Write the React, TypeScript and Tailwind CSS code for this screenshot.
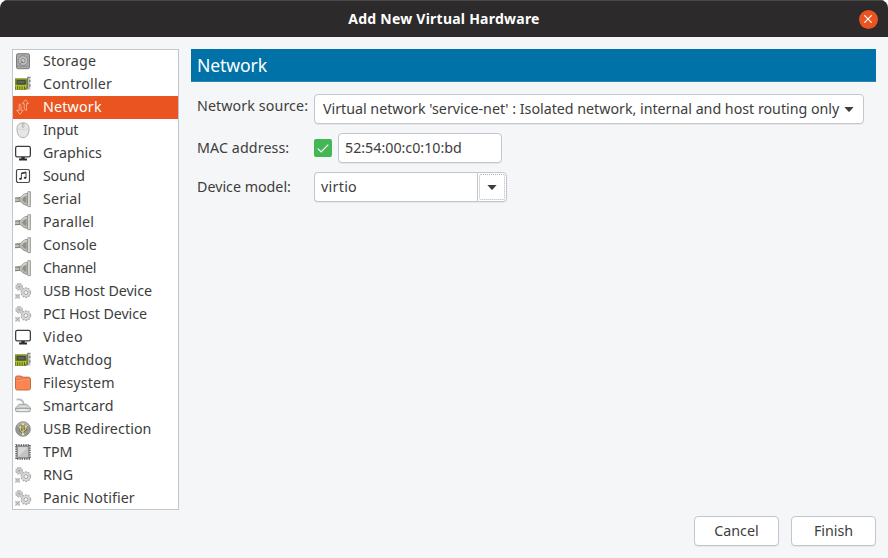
import type { ReactNode } from "react";

function Icon({ children }: { children: ReactNode }) {
  return (
    <svg viewBox="0 0 16 16" className="mb-0.5 block h-4 w-4 shrink-0 overflow-visible" fill="none">
      {children}
    </svg>
  );
}

const Disk = () => (
  <Icon>
    <rect x="1.5" y="0.7" width="13" height="15" rx="1.6" fill="#a9a9a9" stroke="#7b7b7b" />
    <path d="M2.5 13.2h11" stroke="#8f8f8f" />
    <circle cx="8" cy="7.6" r="4.9" fill="#bdbdbd" stroke="#808080" strokeWidth="0.8" />
    <circle cx="8" cy="7.6" r="2.1" fill="#d4d4d4" stroke="#777" strokeWidth="0.8" />
    <path d="M8 7.6 5.2 10.7" stroke="#777" />
  </Icon>
);

const Card = () => (
  <Icon>
    <path d="M0 2.4h13v10.4H0z" fill="#7c8c20" />
    <path d="M0 2.9h13" stroke="#98a53c" />
    <path d="M2.2 4.4h8v3.6h-8z" fill="#59636a" stroke="#333c2b" strokeWidth="0.8" />
    <path d="M0 9h12.4v1.4H0z" fill="#a8bc24" />
    <path d="M0 10.4h11.6v3.4H0z" fill="#56631a" />
    <path d="M1.4 9.5v4M3.7 9.5v4M6 9.5v4M8.3 9.5v4M10.6 9.5v3" stroke="#b7c92c" strokeWidth="1.3" />
    <path d="M12.9 1.6v12" stroke="#6f7170" strokeWidth="1.2" />
    <path d="M12.4 1.4h3.2" stroke="#777" strokeWidth="1.2" />
    <path d="M14.6 1.6v11.8" stroke="#c0c0c0" strokeWidth="1.5" />
    <path d="M14.9 4v2M14.9 8.3v2.4" stroke="#666" />
  </Icon>
);

const Arrows = () => (
  <Icon>
    <g stroke="#f9bfa8" strokeWidth="0.8" strokeLinejoin="round">
      <path d="M4.2 4.9 6 6.3v5h2.1l-2.9 4-3.5-4h2.5z" />
      <path d="M9.2 9.9V4.7H7.1l3.4-4 3.2 4h-2.2v6.8z" />
    </g>
  </Icon>
);

const Mouse = () => (
  <Icon>
    <path d="M8 0.9C4.2 0.9 2 2.9 2 6.6c0 5.5 2 9 6 9s6-3.5 6-9c0-3.7-2.2-5.7-6-5.7Z" fill="#e6e6e4" stroke="#a6a6a4" strokeWidth="0.9" />
    <path d="M3 6.8c3.4 1 6.6 1 10 0" stroke="#d0d0ce" strokeWidth="0.7" />
    <rect x="7.2" y="1.1" width="1.6" height="4.4" rx="0.8" fill="#f8f8f8" stroke="#999" strokeWidth="0.7" />
  </Icon>
);

const Monitor = () => (
  <Icon>
    <rect x="0.65" y="1.4" width="14.7" height="10.4" rx="1.6" fill="#fff" stroke="#3b3b3b" strokeWidth="1.25" />
    <path d="M6.3 12h3.4v1.5H12v1.9H4v-1.9h2.3z" fill="#2c2c2c" />
  </Icon>
);

const Music = () => (
  <Icon>
    <rect x="1.5" y="1.5" width="13" height="13" rx="1.7" fill="#fff" stroke="#484848" strokeWidth="1.2" />
    <path d="M6.4 10.6V5l4.6-1v5.6" stroke="#333" strokeWidth="0.9" />
    <path d="M6.4 5 11 4v1.2L6.4 6.2z" fill="#333" />
    <ellipse cx="5.5" cy="10.8" rx="1.4" ry="1.1" fill="#333" />
    <ellipse cx="10.1" cy="9.8" rx="1.4" ry="1.1" fill="#333" />
  </Icon>
);

const Plug = () => (
  <Icon>
    <path d="M0 6.9 5.2 6.3v4.4L0 11z" fill="#a5a6a0" />
    <path d="M0 7.1 5.2 6.6M0 10.8l5.2-.4" stroke="#7b7c75" strokeWidth="0.9" />
    <path d="M0 9h5" stroke="#d5d6d0" strokeWidth="1" />
    <path d="M4.4 6.6C7.4 6.2 6.9 2.9 12.6 2.2v12.2C6.9 13.8 7.4 10.9 4.4 10.4z" fill="#b9bab3" stroke="#83847d" strokeWidth="0.8" />
    <path d="M7.2 8.4C8.2 6.6 9 5.6 11.4 5.2v6.6C9 11.4 8 10.4 7.2 8.4z" fill="#8f9189" />
    <path d="M7 6.6C8.2 4.6 9.2 3.9 11.8 3.6" stroke="#e6e7e2" strokeWidth="0.9" />
    <path d="M12.9 0.7h2.5v15h-2.5z" fill="#c6c7c0" stroke="#8b8c85" strokeWidth="0.8" />
    <path d="M13.8 1.3v13.8" stroke="#eeeeea" strokeWidth="0.9" />
  </Icon>
);

const Gears = () => (
  <Icon>
    <circle cx="4.1" cy="3.7" r="3.2" stroke="#b0b0b0" strokeWidth="1.3" strokeDasharray="1.7 0.82" />
    <circle cx="4.1" cy="3.7" r="2.7" fill="#d0d0d0" stroke="#b4b4b4" strokeWidth="0.7" />
    <circle cx="4.1" cy="3.7" r="1" fill="#a0a0a0" />
    <circle cx="10.9" cy="9.6" r="4.7" stroke="#a8a8a8" strokeWidth="1.2" strokeDasharray="1.8 1.15" />
    <circle cx="10.9" cy="9.6" r="4.1" fill="#dedede" stroke="#b2b2b2" strokeWidth="0.7" />
    <circle cx="10.9" cy="9.6" r="2" fill="#f4f4f4" stroke="#9c9c9c" strokeWidth="0.9" />
    <path d="M0.2 11h4.8v4.6H0.2z" fill="#d4d4d4" />
    <path d="m0.4 11.2 4.4 4.2M4.8 11.2.4 15.4" stroke="#a6a6a6" strokeWidth="0.9" />
  </Icon>
);

const Folder = () => (
  <Icon>
    <path d="M0.5 3c0-1.4.6-2 2-2h3.2c1 0 1.3 1.2 2.4 1.2h5.4c1.3 0 2 .7 2 2v8.8c0 1.3-.7 2-2 2h-11c-1.3 0-2-.7-2-2z" fill="#fd8650" stroke="#b9623c" strokeWidth="0.9" />
    <path d="M1.1 4.6h4.6c1 0 1.2-1.3 2.4-1.3h6.6" stroke="#d96836" strokeWidth="0.8" />
    <path d="M1.3 5.4h4.8c1 0 1.2-1.2 2.3-1.2h6.2" stroke="#ffa983" strokeWidth="0.7" />
  </Icon>
);

const Reader = () => (
  <Icon>
    <path d="M1.6 1.6c4-.6 6.4.4 7.2 4.6" stroke="#b9b9b9" strokeWidth="1.8" />
    <path d="M0.6 9.8 4.2 6.3h7.6l3.6 3.5v2.6c0 .9-.5 1.3-1.4 1.3H2c-.9 0-1.4-.4-1.4-1.3z" fill="#dcdedf" stroke="#8c8f91" strokeWidth="0.8" />
    <path d="M3.8 8.9 5.3 7.3h5.4l1.5 1.6z" fill="#fdfdfd" stroke="#acacac" strokeWidth="0.6" />
    <path d="M0.8 10.3h14.4" stroke="#85888a" strokeWidth="0.8" />
    <path d="M4 12.1h8" stroke="#fafafa" strokeWidth="1" />
  </Icon>
);

const Usb = () => (
  <Icon>
    <circle cx="8" cy="8" r="7.3" fill="#979795" stroke="#7e7e7b" strokeWidth="0.8" />
    <path d="M2.6 5a6.2 6.2 0 0 1 10.8 0" stroke="#b6b6b3" strokeWidth="1.2" />
    <path d="M8 3v10.4M8 11.4 5.2 9.5V6.5M8 10.2l2.8-1.8V5.6" stroke="#5f5c3c" strokeWidth="2.2" />
    <path d="M8 3v10.4M8 11.4 5.2 9.5V6.5M8 10.2l2.8-1.8V5.6" stroke="#eee28c" strokeWidth="1" />
    <path d="m8 1.4 1.6 2.6H6.4zM9.9 4.4h1.9v2H9.9z" fill="#eee28c" />
    <circle cx="5.2" cy="6.3" r="1.1" fill="#eee28c" />
    <circle cx="8" cy="13.2" r="1.3" fill="#eee28c" />
  </Icon>
);

const Chip = () => (
  <Icon>
    <rect x="1.1" y="1.1" width="13.8" height="13.8" stroke="#555" strokeWidth="1.6" strokeDasharray="1.3 1" />
    <rect x="2.1" y="2.1" width="11.8" height="11.8" rx="0.6" fill="#c3c3c3" stroke="#666" strokeWidth="0.9" />
    <path d="M3.2 12.8V3.2h9.6z" fill="#d9d9d9" />
  </Icon>
);

const devices = [
  { name: "Storage", icon: Disk, fit: "tracking-[0.17px]" },
  { name: "Controller", icon: Card, fit: "tracking-[0.21px]" },
  { name: "Network", icon: Arrows, fit: "tracking-[0.2px]" },
  { name: "Input", icon: Mouse, fit: "tracking-[-0.25px]" },
  { name: "Graphics", icon: Monitor, fit: "tracking-[0px]" },
  { name: "Sound", icon: Music, fit: "tracking-[-0.2px]" },
  { name: "Serial", icon: Plug, fit: "tracking-[0.2px]" },
  { name: "Parallel", icon: Plug, fit: "tracking-[0.25px]" },
  { name: "Console", icon: Plug, fit: "tracking-[0.05px]" },
  { name: "Channel", icon: Plug, fit: "tracking-[-0.3px]" },
  { name: "USB Host Device", icon: Gears, fit: "tracking-[-0.07px]" },
  { name: "PCI Host Device", icon: Gears, fit: "tracking-[-0.07px]" },
  { name: "Video", icon: Monitor, fit: "tracking-[0.5px]" },
  { name: "Watchdog", icon: Card, fit: "tracking-[0.16px]" },
  { name: "Filesystem", icon: Folder, fit: "tracking-[0.15px]" },
  { name: "Smartcard", icon: Reader, fit: "tracking-[0.15px]" },
  { name: "USB Redirection", icon: Usb, fit: "tracking-[0.08px]" },
  { name: "TPM", icon: Chip, fit: "tracking-[0px]" },
  { name: "RNG", icon: Gears, fit: "tracking-[0px]" },
  { name: "Panic Notifier", icon: Gears, fit: "tracking-[0.1px]" },
];

const Caret = () => (
  <svg viewBox="0 0 10 5" className="block h-[5px] w-2.5 shrink-0" fill="#3d3d3d">
    <path d="M0.4 0h9.2L5.6 4.6q-.6.5-1.2 0z" />
  </svg>
);

const field = "flex h-[30px] items-center rounded-[4px] border border-[#c3c7cd] bg-white shadow-[0_1px_0_rgba(0,0,0,0.06)]";

export default function App() {
  return (
    <div className="h-[558px] w-[888px] overflow-hidden bg-white font-['Noto_Sans','Open_Sans',sans-serif] text-[14.25px] leading-none text-[#3d3d3d]">
      <div className="flex h-full flex-col overflow-hidden rounded-t-[8px] bg-[#f5f6f7]">
        <header className="grid h-[37px] shrink-0 grid-cols-[40px_1fr_40px] items-center border-t border-[#494747] bg-[#2c2a2a]">
          <h1 className="col-start-2 text-center text-[14px] font-bold tracking-[0.24px] text-white">Add New Virtual Hardware</h1>
          <button className="ml-[10.5px] flex h-[19px] w-[19px] items-center justify-center rounded-full bg-[#e95420]" aria-label="Close">
            <svg viewBox="0 0 8 8" className="h-2 w-2" stroke="#fff" strokeWidth="1.2">
              <path d="m0.3 0.3 7.4 7.4M7.7 0.3.3 7.7" />
            </svg>
          </button>
        </header>

        <main className="flex flex-1 gap-3 px-3 pt-3">
          <ul className="h-[461px] w-[167px] overflow-hidden border border-[#c0c6cc] bg-white">
            {devices.map(({ name, icon: Glyph, fit }) => (
              <li
                key={name}
                className={`flex h-[23px] items-center pl-0.5 ${name === "Network" ? "bg-[#e95420] text-white" : ""}`}
              >
                <Glyph />
                <span className={`ml-3 whitespace-nowrap pb-px ${fit}`}>{name}</span>
              </li>
            ))}
          </ul>

          <section className="flex flex-1 flex-col">
            <h2 className="flex h-[33px] items-center border-b border-[#2a87b5] bg-[#0072a8] pl-1.5 pt-px text-[17.6px] tracking-[-0.1px] text-white">
              Network
            </h2>
            <div className="mt-3 grid grid-cols-[117px_auto] items-center justify-start gap-y-[9px] pl-1.5">
              <label className="-mt-1.5 tracking-[0.1px]">Network source:</label>
              <div className={`${field} w-[550px] justify-between pl-2 pr-[9px]`}>
                <span className="whitespace-nowrap tracking-[-0.01px]">Virtual network 'service-net' : Isolated network, internal and host routing only</span>
                <Caret />
              </div>

              <label className="tracking-[0.1px]">MAC address:</label>
              <div className="flex items-center gap-1.5">
                <span className="flex h-[18px] w-[18px] items-center justify-center rounded-[2px] bg-[#43b755]">
                  <svg viewBox="0 0 12 9" className="h-[9px] w-3" fill="none" stroke="#fff" strokeWidth="1.2">
                    <path d="m0.8 4.6 3.3 3.3L11.3 0.7" />
                  </svg>
                </span>
                <div className={`${field} w-[164px] pl-1.5`}>52:54:00:c0:10:bd</div>
              </div>

              <label>Device model:</label>
              <div className="flex">
                <div className={`${field} w-[163px] rounded-r-none border-r-0 pl-1.5 tracking-[0.3px]`}>virtio</div>
                <div className={`${field} w-[30px] rounded-l-none p-px`}>
                  <div className="flex h-full w-full items-center justify-center rounded-[2px] border border-dotted border-[#b4b4b4]">
                    <Caret />
                  </div>
                </div>
              </div>
            </div>
          </section>
        </main>

        <footer className="flex h-[42px] shrink-0 items-start justify-end gap-3 pr-3">
          <button className={`${field} w-[85px] justify-center`}>Cancel</button>
          <button className={`${field} w-[85px] justify-center`}>Finish</button>
        </footer>
      </div>
    </div>
  );
}
